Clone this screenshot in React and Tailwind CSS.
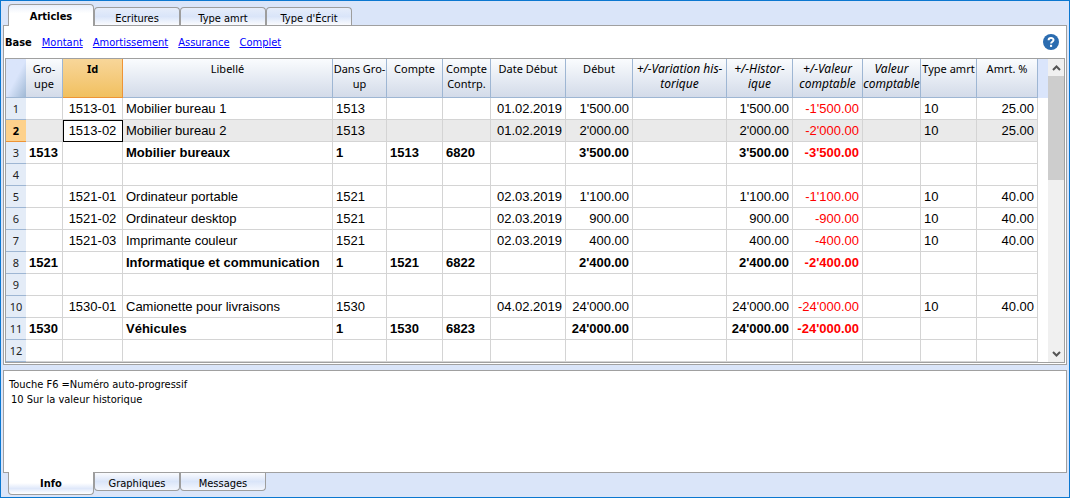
import React from "react";

const columns = [
  { id: "groupe", lines: ["Gro-", "upe"], width: "w-[37px]" },
  { id: "id", lines: ["Id"], width: "w-[60px]", align: "text-center", selected: true },
  { id: "libelle", lines: ["Libellé"], width: "w-[210px]" },
  { id: "dans", lines: ["Dans Gro-", "up"], width: "w-[54px]" },
  { id: "compte", lines: ["Compte"], width: "w-[56px]" },
  { id: "contrp", lines: ["Compte", "Contrp."], width: "w-[48px]" },
  { id: "date", lines: ["Date Début"], width: "w-[75px]", align: "text-right" },
  { id: "debut", lines: ["Début"], width: "w-[67px]", align: "text-right" },
  { id: "variation", lines: ["+/-Variation his-", "torique"], width: "w-[94px]", align: "text-right", italic: true },
  { id: "histor", lines: ["+/-Histor-", "ique"], width: "w-[66px]", align: "text-right", italic: true },
  { id: "valeurPm", lines: ["+/-Valeur", "comptable"], width: "w-[70px]", align: "text-right", italic: true, red: true },
  { id: "valeur", lines: ["Valeur", "comptable"], width: "w-[58px]", align: "text-right", italic: true },
  { id: "type", lines: ["Type amrt"], width: "w-[56px]" },
  { id: "amrt", lines: ["Amrt. %"], width: "w-[61px]", align: "text-right" },
];

const item = (id, libelle, dans, date, montant, taux) => ({
  id, libelle, dans, date, debut: montant, histor: montant, valeurPm: "-" + montant, type: "10", amrt: taux,
});
const total = (groupe, libelle, contrp, montant) => ({
  bold: true, groupe, libelle, dans: "1", compte: groupe, contrp, debut: montant, histor: montant, valeurPm: "-" + montant,
});

const rows = [
  item("1513-01", "Mobilier bureau 1", "1513", "01.02.2019", "1'500.00", "25.00"),
  item("1513-02", "Mobilier bureau 2", "1513", "01.02.2019", "2'000.00", "25.00"),
  total("1513", "Mobilier bureaux", "6820", "3'500.00"),
  {},
  item("1521-01", "Ordinateur portable", "1521", "02.03.2019", "1'100.00", "40.00"),
  item("1521-02", "Ordinateur desktop", "1521", "02.03.2019", "900.00", "40.00"),
  item("1521-03", "Imprimante couleur", "1521", "02.03.2019", "400.00", "40.00"),
  total("1521", "Informatique et communication", "6822", "2'400.00"),
  {},
  item("1530-01", "Camionette pour livraisons", "1530", "04.02.2019", "24'000.00", "40.00"),
  total("1530", "Véhicules", "6823", "24'000.00"),
  {},
];

const ACTIVE_ROW = 1;

function TopTabs() {
  return (
    <nav className="relative z-10 -mb-px flex h-[25px] items-end pl-[7px]">
      <button className="h-[22px] w-[86px] rounded-t-[4px] border border-b-0 border-[#9d9d9d] bg-linear-to-b from-[#eaf0fb] to-white to-40% pt-[3px] font-bold">
        Articles
      </button>
      {["Ecritures", "Type amrt", "Type d'Écrit"].map((label) => (
        <button
          key={label}
          className="mb-px h-[18px] w-[86px] rounded-t-[4px] border border-b-0 border-[#9d9d9d] bg-linear-to-b from-[#e6edfa] via-[#dae5f9] to-[#fafbfe] pt-[3px]"
        >
          {label}
        </button>
      ))}
    </nav>
  );
}

function BottomTabs() {
  return (
    <nav className="relative z-10 -mt-px flex h-[25px] items-start pl-[7px]">
      <button className="h-[23px] w-[86px] rounded-b-[4px] border border-t-0 border-[#9d9d9d] bg-linear-to-b from-white from-50% via-[#dfe8fa] via-75% to-white pt-[3px] font-bold">
        Info
      </button>
      {["Graphiques", "Messages"].map((label) => (
        <button
          key={label}
          className="mt-px h-[18px] w-[86px] rounded-b-[4px] border border-t-0 border-[#9d9d9d] bg-linear-to-b from-[#fafbfe] via-[#dae5f9] to-[#f3f6fd] pt-[3px]"
        >
          {label}
        </button>
      ))}
    </nav>
  );
}

function Header() {
  return (
    <thead className="font-['Noto_Sans',sans-serif] leading-[15px]">
      <tr className="h-[39px]">
        <td className="w-[20px] border-b border-[#9eb6d3] bg-linear-to-br from-[#dae5fb] from-50% to-[#9fb8d4] p-0" />
        {columns.map((c) => (
          <th
            key={c.id}
            scope="col"
            className={
              "border-r border-b p-0 pt-[2px] text-center align-top whitespace-nowrap " +
              (c.selected
                ? "border-[#ee9436] bg-linear-to-b from-[#f8d699] to-[#f1c05e] font-bold "
                : "border-[#9eb6d3] bg-linear-to-b from-[#fafcfe] to-[#d3dbe9] font-normal ") +
              (c.italic ? "text-[12px] italic " : "text-[11px] ") +
              c.width
            }
          >
            <span className="flex flex-col items-center">
              {c.lines.map((line) => (
                <span key={line}>{line}</span>
              ))}
            </span>
          </th>
        ))}
        <td className="bg-[#dae5fb] p-0" />
      </tr>
    </thead>
  );
}

function Row({ row, index }) {
  const active = index === ACTIVE_ROW;
  return (
    <tr className={"h-[22px] " + (row.bold ? "font-bold" : "")}>
      <th
        scope="row"
        className={
          "border-b p-0 text-center font-['Noto_Sans',sans-serif] text-[11px] leading-[20px] " +
          (active ? "border-[#ee9436] bg-[#fdd18b] font-bold" : "border-[#9eb6d3] bg-[#e4ecf7] font-normal text-[#222]")
        }
      >
        {index + 1}
      </th>
      {columns.map((c) => {
        const cursor = active && c.selected;
        return (
          <td
            key={c.id}
            className={
              "border-r border-b border-[#d4d4d4] whitespace-nowrap leading-[20px] " +
              (cursor ? "bg-white p-0 outline outline-1 -outline-offset-1 outline-black " : "px-[3px] py-0 ") +
              (active && !cursor ? "bg-[#eaeaea] " : "") +
              (c.red ? "text-[#ff0000] " : "") +
              (c.align || "text-left")
            }
          >
            {row[c.id]}
          </td>
        );
      })}
      <td className="p-0" />
    </tr>
  );
}

function Scrollbar() {
  return (
    <div className="flex w-[16px] shrink-0 flex-col bg-[#f0f0f0]">
      <button aria-label="Défiler vers le haut" className="flex h-[17px] items-center justify-center">
        <svg width="9" height="6" viewBox="0 0 9 6" fill="none" stroke="#555" strokeWidth="2">
          <path d="M1 5 4.5 1.5 8 5" />
        </svg>
      </button>
      <div className="h-[104px] bg-[#cdcdcd]" />
      <button aria-label="Défiler vers le bas" className="mt-auto flex h-[17px] items-center justify-center">
        <svg width="9" height="6" viewBox="0 0 9 6" fill="none" stroke="#555" strokeWidth="2">
          <path d="M1 1 4.5 4.5 8 1" />
        </svg>
      </button>
    </div>
  );
}

export default function App() {
  return (
    <div className="flex min-h-screen flex-col border border-[#0b77d0] bg-[#dae5f9] font-['DejaVu_Sans_Condensed','DejaVu_Sans',sans-serif] text-[11px] text-black">
      <TopTabs />
      <main className="mx-[2px] border border-[#a0a0a0] bg-white px-px pb-px">
        <div className="flex h-[32px] items-center justify-between pr-[6px]">
          <div className="flex gap-[10px] pt-[3px]">
            <span className="font-bold">Base</span>
            {["Montant", "Amortissement", "Assurance", "Complet"].map((label) => (
              <a key={label} href="#" className="text-[#0000ff] underline">
                {label}
              </a>
            ))}
          </div>
          <button aria-label="Aide">
            <svg width="16" height="16" viewBox="0 0 16 16">
              <circle cx="8" cy="8" r="8" fill="#2b6cb0" />
              <path d="M5.6 6.2C5.6 3.2 10.5 3.3 10.5 6c0 1.7-2.4 1.7-2.4 3.5" fill="none" stroke="#fff" strokeWidth="2" />
              <rect x="7" y="10.8" width="2.1" height="2.1" fill="#fff" />
            </svg>
          </button>
        </div>
        <div className="flex border border-[#a0a0a0]">
          <table className="w-full table-fixed border-separate border-spacing-0 font-['Liberation_Sans',Arial,sans-serif] text-[13px]">
            <Header />
            <tbody>
              {rows.map((row, i) => (
                <Row key={i} row={row} index={i} />
              ))}
            </tbody>
          </table>
          <Scrollbar />
        </div>
      </main>
      <section className="mx-[2px] mt-[5px] flex-1 border border-[#a0a0a0] bg-white px-[5px] py-[6px] leading-[15px]">
        <p>Touche F6 =Numéro auto-progressif</p>
        <p className="pl-[2px]">10 Sur la valeur historique</p>
      </section>
      <BottomTabs />
    </div>
  );
}
